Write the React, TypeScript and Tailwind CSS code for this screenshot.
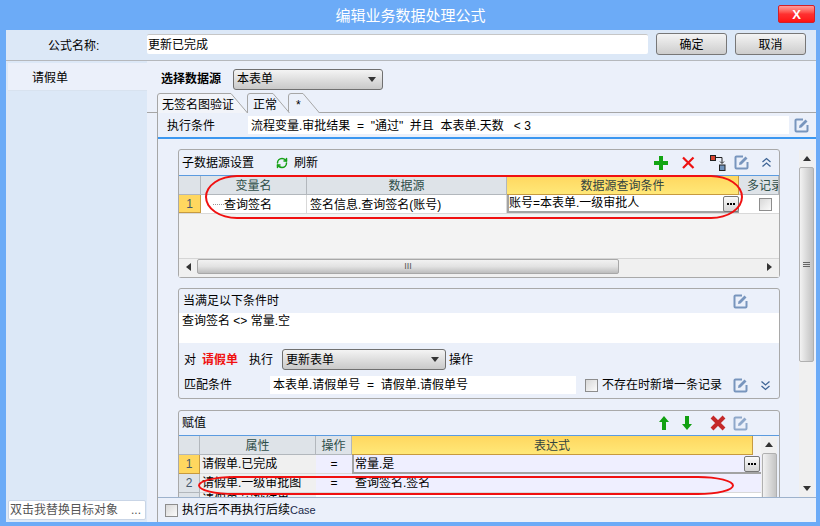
import React from 'react'
import { RefreshCw } from 'lucide-react'

const EditIcon = ({ light }: { light?: boolean }) => (
  <svg width="15" height="15" viewBox="0 0 15 15" className="shrink-0">
    <path d="M9 1.5H2.5a1 1 0 0 0-1 1v10a1 1 0 0 0 1 1h10a1 1 0 0 0 1-1V7" fill="none" stroke={light ? '#8fa8ca' : '#7895bd'} strokeWidth="2" />
    <path d="M5.5 7.5 11.5 1.5 13.5 3.5 7.5 9.5 5 10Z" fill={light ? '#8fa8ca' : '#7895bd'} />
  </svg>
)

const Chevrons = ({ down }: { down?: boolean }) => (
  <svg width="11" height="11" viewBox="0 0 11 11" className={down ? 'rotate-180' : ''}>
    <path d="M1.5 5 5.5 1.5 9.5 5M1.5 9.5 5.5 6 9.5 9.5" fill="none" stroke="#3f6596" strokeWidth="1.3" />
  </svg>
)

const PlusIcon = () => (
  <svg width="14" height="14" viewBox="0 0 14 14">
    <path d="M5 0h4v5h5v4H9v5H5V9H0V5h5z" fill="#12a512" />
  </svg>
)

const CrossIcon = () => (
  <svg width="13" height="13" viewBox="0 0 13 13">
    <path d="M1 1.5 11.5 12M11.5 1.5 1 12" stroke="#ee1111" strokeWidth="2.2" />
  </svg>
)

const BigCross = () => (
  <svg width="16" height="16" viewBox="0 0 16 16">
    <path d="M2 2 14 14M14 2 2 14" stroke="#c42a2a" strokeWidth="4" />
  </svg>
)

const MoveIcon = () => (
  <svg width="16" height="16" viewBox="0 0 16 16">
    <rect x="0.5" y="0.5" width="5" height="5" fill="#d9442f" stroke="#222" />
    <rect x="9.5" y="10" width="5.5" height="5.5" fill="#6f93bd" stroke="#222" />
    <path d="M6 2.5h6V8M10 6.5l2 2 2-2" fill="none" stroke="#222" />
  </svg>
)

const ArrowIcon = ({ down }: { down?: boolean }) => (
  <svg width="12" height="14" viewBox="0 0 12 14" className={down ? 'rotate-180' : ''}>
    <path d="M6 0 11 6H8V14H4V6H1Z" fill="#12a012" />
  </svg>
)

const Triangle = ({ dir }: { dir: 'up' | 'down' | 'left' | 'right' }) => {
  const d = { up: 'M0 5 4 0 8 5Z', down: 'M0 0 8 0 4 5Z', left: 'M5 0V8L0 4Z', right: 'M0 0V8L5 4Z' }[dir]
  const vertical = dir === 'up' || dir === 'down'
  return (
    <svg width={vertical ? 8 : 5} height={vertical ? 5 : 8} viewBox={vertical ? '0 0 8 5' : '0 0 5 8'}>
      <path d={d} fill="#333" />
    </svg>
  )
}

const Check = () => (
  <div className="w-[13px] h-[13px] border border-[#8d8d8d] bg-gradient-to-br from-[#d8d8d8] to-[#fbfbfb] shrink-0" />
)

const Ellipsis = () => (
  <div className="w-[16px] h-[16px] rounded-[2px] border border-[#777] bg-gradient-to-b from-[#fafafa] to-[#d5d5d5] flex items-center justify-center gap-[1px] shrink-0">
    <span className="w-[2px] h-[2px] bg-black" />
    <span className="w-[2px] h-[2px] bg-black" />
    <span className="w-[2px] h-[2px] bg-black" />
  </div>
)

const Select = ({ text, className }: { text: string; className: string }) => (
  <div className={`h-[21px] rounded-[3px] border border-[#707070] bg-gradient-to-b from-[#f4f4f4] to-[#c9c9c9] flex items-center justify-between pl-[3px] pr-[3px] ${className}`}>
    <span>{text}</span>
    <span className="mr-[3px] flex"><Triangle dir="down" /></span>
  </div>
)

const Button = ({ text }: { text: string }) => (
  <div className="w-[71px] h-[22px] pt-[1px] rounded-[3px] border border-[#777] bg-gradient-to-b from-[#f4f4f4] to-[#cdcdcd] flex items-center justify-center">
    {text}
  </div>
)

const Tab = ({ text, width, fill, className, textClass }: { text: string; width: number; fill: string; className: string; textClass: string }) => (
  <div className={`relative h-[20px] flex items-center ${className}`} style={{ width }}>
    <svg width={width} height="20" viewBox={`0 0 ${width} 20`} className="absolute left-0 top-0">
      <path d={`M0.5 20V3Q0.5 0.5 3 0.5H${width - 17}L${width - 0.5} 20`} fill={fill} stroke="#a6a6a6" />
    </svg>
    <span className={`relative pt-[3px] ${textClass}`}>{text}</span>
  </div>
)

const Header = ({ text, className, active }: { text: string; className: string; active?: boolean }) => (
  <div
    className={`h-[19px] pt-[1px] flex items-center justify-center overflow-hidden whitespace-nowrap border-r border-b ${
      active
        ? 'bg-gradient-to-b from-[#ffd75f] to-[#ffe878] border-[#c79a3f] text-[#33443f]'
        : 'bg-[#dee3e8] border-[#b2b7bc] text-[#2e4e48]'
    } ${className}`}
  >
    {text}
  </div>
)

const RowNo = ({ n, active, className }: { n?: number; active?: boolean; className: string }) => (
  <div className={`flex items-center justify-center border-r border-b text-[#44586c] ${active ? 'bg-[#ffd75f] border-[#c79a3f]' : 'bg-[#dee3e8] border-[#b2b7bc]'} ${className}`}>
    {n}
  </div>
)

export default function App() {
  return (
    <div className="w-[820px] h-[526px] bg-[#6cabf7] overflow-hidden text-[12px] leading-none text-black font-['Liberation_Sans','Noto_Sans_CJK_SC',sans-serif]">
      {/* Title bar */}
      <div className="relative h-[30px] flex items-center justify-center text-white text-[15px]">
        <span className="ml-[1px]">编辑业务数据处理公式</span>
        <div className="absolute left-[778px] top-[5px] w-[37px] h-[18px] rounded-[2px] border border-[#d0202a] bg-gradient-to-b from-[#ff9a9a] via-[#ff3030] to-[#ff1010] flex items-center justify-center font-bold text-[13px] font-['Liberation_Sans']">
          X
        </div>
      </div>

      <div className="ml-[6px] w-[810px] h-[492px] flex flex-col bg-[#dce8f7]">
        {/* Formula name */}
        <div className="h-[31px] shrink-0 border-b border-[#b5b8bc] flex items-start">
          <div className="w-[141px] pl-[42px] pt-[10px]">公式名称:</div>
          <div className="w-[501px] h-[20px] mt-[4px] pt-[1px] bg-white rounded-[2px] border-t border-[#c6c6c6] flex items-center pl-[1px]">更新已完成</div>
          <div className="flex gap-[8px] ml-[8px] mt-[3px]">
            <Button text="确定" />
            <Button text="取消" />
          </div>
        </div>

        <div className="flex-1 flex min-h-0">
          {/* Left list */}
          <div className="w-[141px] shrink-0 flex flex-col justify-between pb-[2px]">
            <div className="mt-[2px] ml-[2px] h-[28px] pt-[2px] bg-[#ebf0fa] border-b border-[#d8e2ef] flex items-center pl-[24px]">请假单</div>
            <div className="ml-[2px] mr-[1px] h-[20px] bg-white rounded-[2px] border border-[#c9d5e6] flex items-center justify-between pl-[1px] pr-[4px] text-[#555]">
              <span>双击我替换目标对象</span>
              <span>...</span>
            </div>
          </div>

          {/* Right pane */}
          <div className="flex-1 min-w-0 bg-[#ebf0fa] flex flex-col">
            <div className="h-[32px] shrink-0 flex items-center pl-[14px] pt-[4px]">
              <span className="font-bold w-[72px]">选择数据源</span>
              <Select text="本表单" className="w-[150px]" />
            </div>

            <div className="h-[20px] shrink-0 flex pl-[10px] border-b border-[#a6a6a6] relative">
              <Tab text="无签名图验证" width={91} fill="#f2f4f9" className="" textClass="pl-[5px]" />
              <Tab text="正常" width={43} fill="#ebf0fa" className="-ml-[1px] z-10" textClass="pl-[6px]" />
              <Tab text="*" width={32} fill="#ebf0fa" className="-ml-[2px]" textClass="pl-[8px]" />
            </div>

            <div className="flex-1 min-h-0 ml-[10px] border-l border-[#a6a6a6] flex flex-col">
              {/* Run condition */}
              <div className="h-[26px] shrink-0 border-b-2 border-[#3b97f0] flex items-center">
                <span className="w-[90px] pl-[9px] pt-[1px]">执行条件</span>
                <div className="w-[541px] h-[18px] pt-[1px] bg-white flex items-center pl-[3px] whitespace-pre">
                  流程变量.审批结果  =  "通过"  并且  本表单.天数   &lt; 3
                </div>
                <span className="ml-[5px]"><EditIcon /></span>
              </div>

              <div className="flex-1 min-h-0 flex overflow-hidden">
                <div className="w-[622px] shrink-0 pl-[20px] pt-[10px] flex flex-col gap-[10px]">
                  {/* Sub data source */}
                  <div className="relative h-[129px] shrink-0 border border-[#a9a9a9] rounded-[3px] flex flex-col overflow-visible">
                    <div className="h-[26px] shrink-0 border-b border-[#5b9be0] flex items-center pl-[3px]">
                      <span className="w-[94px]">子数据源设置</span>
                      <RefreshCw size={12} strokeWidth={3} className="text-[#16a016]" />
                      <span className="ml-[6px]">刷新</span>
                      <div className="ml-auto flex items-center mr-[7px]">
                        <PlusIcon />
                        <span className="ml-[14px] flex"><CrossIcon /></span>
                        <span className="ml-[15px] flex"><MoveIcon /></span>
                        <span className="ml-[8px] flex"><EditIcon /></span>
                        <span className="ml-[12px] flex"><Chevrons /></span>
                      </div>
                    </div>
                    <div className="flex-1 bg-[#f3f3f3] flex flex-col min-h-0">
                      <div className="flex shrink-0">
                        <Header text="" className="w-[22px]" />
                        <Header text="变量名" className="w-[106px]" />
                        <Header text="数据源" className="w-[200px]" />
                        <Header text="数据源查询条件" className="w-[232px]" active />
                        <Header text="多记录" className="flex-1 justify-start pl-[8px]" />
                      </div>
                      <div className="flex h-[19px] shrink-0 border-b border-[#d9d9d9] bg-white">
                        <RowNo n={1} active className="w-[22px]" />
                        <div className="w-[106px] pt-[1px] flex items-center border-r border-[#d9d9d9] pl-[12px]">
                          <span className="w-[11px] border-t border-dotted border-[#999]" />
                          <span>查询签名</span>
                        </div>
                        <div className="w-[200px] pt-[1px] flex items-center border-r border-[#d9d9d9] pl-[3px]">签名信息.查询签名(账号)</div>
                        <div className="w-[232px] flex items-center justify-between border-l-2 border-b-2 border-[#a3a3a3]">
                          <span>账号=本表单.一级审批人</span>
                          <span className="-mb-[1px]"><Ellipsis /></span>
                        </div>
                        <div className="flex-1 flex items-center pl-[20px]"><Check /></div>
                      </div>
                      <div className="flex-1" />
                      <div className="h-[19px] shrink-0 border-t border-[#d5d5d5] bg-[#f0f0f0] flex items-start">
                        <span className="w-[18px] h-[15px] flex items-center justify-center"><Triangle dir="left" /></span>
                        <div className="w-[422px] h-[15px] rounded-[2px] border border-[#a8a8a8] bg-gradient-to-b from-[#f2f2f2] via-[#e2e2e2] to-[#bdbdbd] flex items-center justify-center text-[#555] text-[9px] font-['Liberation_Sans']">III</div>
                        <span className="ml-auto mr-[7px] h-[15px] flex items-center"><Triangle dir="right" /></span>
                      </div>
                    </div>
                    <div className="absolute left-[26px] top-[25px] w-[538px] h-[44px] rounded-[32px/50%] border-2 border-[#f01010] pointer-events-none" />
                  </div>

                  {/* When condition */}
                  <div className="h-[111px] shrink-0 border border-[#a9a9a9] rounded-[3px] flex flex-col">
                    <div className="h-[24px] shrink-0 flex items-center justify-between pl-[4px] pr-[31px]">
                      <span>当满足以下条件时</span>
                      <EditIcon />
                    </div>
                    <div className="h-[30px] shrink-0 bg-white pl-[3px] pt-[2px] whitespace-pre">查询签名 &lt;&gt; 常量.空</div>
                    <div className="h-[23px] mt-[5px] shrink-0 flex items-center pl-[5px]">
                      <span className="w-[18px]">对</span>
                      <span className="w-[47px] font-bold text-[#f01010]">请假单</span>
                      <span className="w-[33px]">执行</span>
                      <Select text="更新表单" className="w-[164px]" />
                      <span className="ml-[3px]">操作</span>
                    </div>
                    <div className="h-[18px] mt-[5px] shrink-0 flex items-center pl-[5px]">
                      <span className="w-[86px]">匹配条件</span>
                      <div className="w-[306px] h-[18px] bg-white flex items-center pl-[3px] whitespace-pre">本表单.请假单号  =  请假单.请假单号</div>
                      <span className="ml-[9px]"><Check /></span>
                      <span className="ml-[4px] w-[122px]">不存在时新增一条记录</span>
                      <span className="ml-[9px]"><EditIcon /></span>
                      <span className="ml-[12px]"><Chevrons down /></span>
                    </div>
                  </div>

                  {/* Assignment */}
                  <div className="relative mt-[1px] h-[110px] shrink-0 border border-[#a9a9a9] rounded-t-[3px] flex flex-col">
                    <div className="h-[25px] shrink-0 border-b border-[#5b9be0] flex items-center pl-[3px]">
                      <span>赋值</span>
                      <div className="ml-auto flex items-center mr-[31px]">
                        <ArrowIcon />
                        <span className="ml-[11px] flex"><ArrowIcon down /></span>
                        <span className="ml-[17px] flex"><BigCross /></span>
                        <span className="ml-[7px] flex"><EditIcon light /></span>
                      </div>
                    </div>
                    <div className="flex flex-1 min-h-0">
                      <div className="w-[582px] flex flex-col">
                        <div className="flex shrink-0">
                          <Header text="" className="w-[21px]" />
                          <Header text="属性" className="w-[116px]" />
                          <Header text="操作" className="w-[36px]" />
                          <Header text="表达式" className="w-[401px]" active />
                          <div className="flex-1 bg-[#f3f3f3]" />
                        </div>
                        <div className="flex h-[19px] shrink-0">
                          <RowNo n={1} active className="w-[21px]" />
                          <div className="w-[116px] flex items-center bg-[#f0f0f0] border-b border-[#d9d9d9] pl-[2px]">请假单.已完成</div>
                          <div className="w-[36px] flex items-center justify-center bg-[#efefff] border-b border-[#d9d9d9] font-['Liberation_Sans']">=</div>
                          <div className="w-[409px] flex items-center justify-between bg-[#efefff] border-l-2 border-b-2 border-[#a3a3a3] pl-[1px] pr-[1px]">
                            <span>常量.是</span>
                            <Ellipsis />
                          </div>
                        </div>
                        <div className="flex h-[19px] shrink-0">
                          <RowNo n={2} className="w-[21px]" />
                          <div className="w-[116px] flex items-center bg-[#f0f0f0] border-b border-[#d9d9d9] pl-[2px]">请假单.一级审批图</div>
                          <div className="w-[36px] flex items-center justify-center bg-[#efefff] border-b border-[#d9d9d9] font-['Liberation_Sans']">=</div>
                          <div className="w-[409px] flex items-center bg-[#efefff] border-b border-[#d9d9d9] pl-[3px]">查询签名.签名</div>
                        </div>
                        <div className="flex h-[19px] shrink-0">
                          <RowNo className="w-[21px]" />
                          <div className="w-[116px] bg-[#f0f0f0] pl-[2px] pt-[1px] overflow-hidden whitespace-nowrap">请假单.审批结果</div>
                          <div className="flex-1 bg-white" />
                        </div>
                      </div>
                      <div className="w-[16px] bg-[#f0f0f0] flex flex-col items-center pt-[6px]">
                        <Triangle dir="up" />
                        <div className="mt-[6px] w-[15px] flex-1 rounded-[2px] border border-[#b0b0b0] bg-gradient-to-r from-[#f2f2f2] to-[#c4c4c4]" />
                      </div>
                    </div>
                    <div className="absolute left-[19px] top-[65px] w-[536px] h-[19px] rounded-[36px/50%] border-2 border-[#f01010] pointer-events-none" />
                  </div>
                </div>

                {/* Outer scrollbar */}
                <div className="ml-[19px] mt-[11px] w-[15px] bg-[#f0f0f0] flex flex-col items-center">
                  <div className="h-[17px] shrink-0 flex items-center justify-center"><Triangle dir="up" /></div>
                  <div className="w-[15px] h-[195px] rounded-[2px] border border-[#b0b0b0] bg-gradient-to-r from-[#f2f2f2] to-[#c2c2c2] flex flex-col items-center justify-center gap-[1px]">
                    <span className="w-[7px] h-[1px] bg-[#666]" />
                    <span className="w-[7px] h-[1px] bg-[#666]" />
                    <span className="w-[7px] h-[1px] bg-[#666]" />
                  </div>
                  <div className="flex-1" />
                  <div className="h-[17px] shrink-0 flex items-center justify-center"><Triangle dir="down" /></div>
                </div>
              </div>

              {/* Footer */}
              <div className="h-[25px] shrink-0 border-t border-[#9db2cc] bg-[#ebf0fa] flex items-center pl-[7px] gap-[4px]">
                <Check />
                <span>执行后不再执行后续<span className="text-[11px] text-[#1a2a4a]">Case</span></span>
              </div>
            </div>
          </div>
        </div>
      </div>
    </div>
  )
}
